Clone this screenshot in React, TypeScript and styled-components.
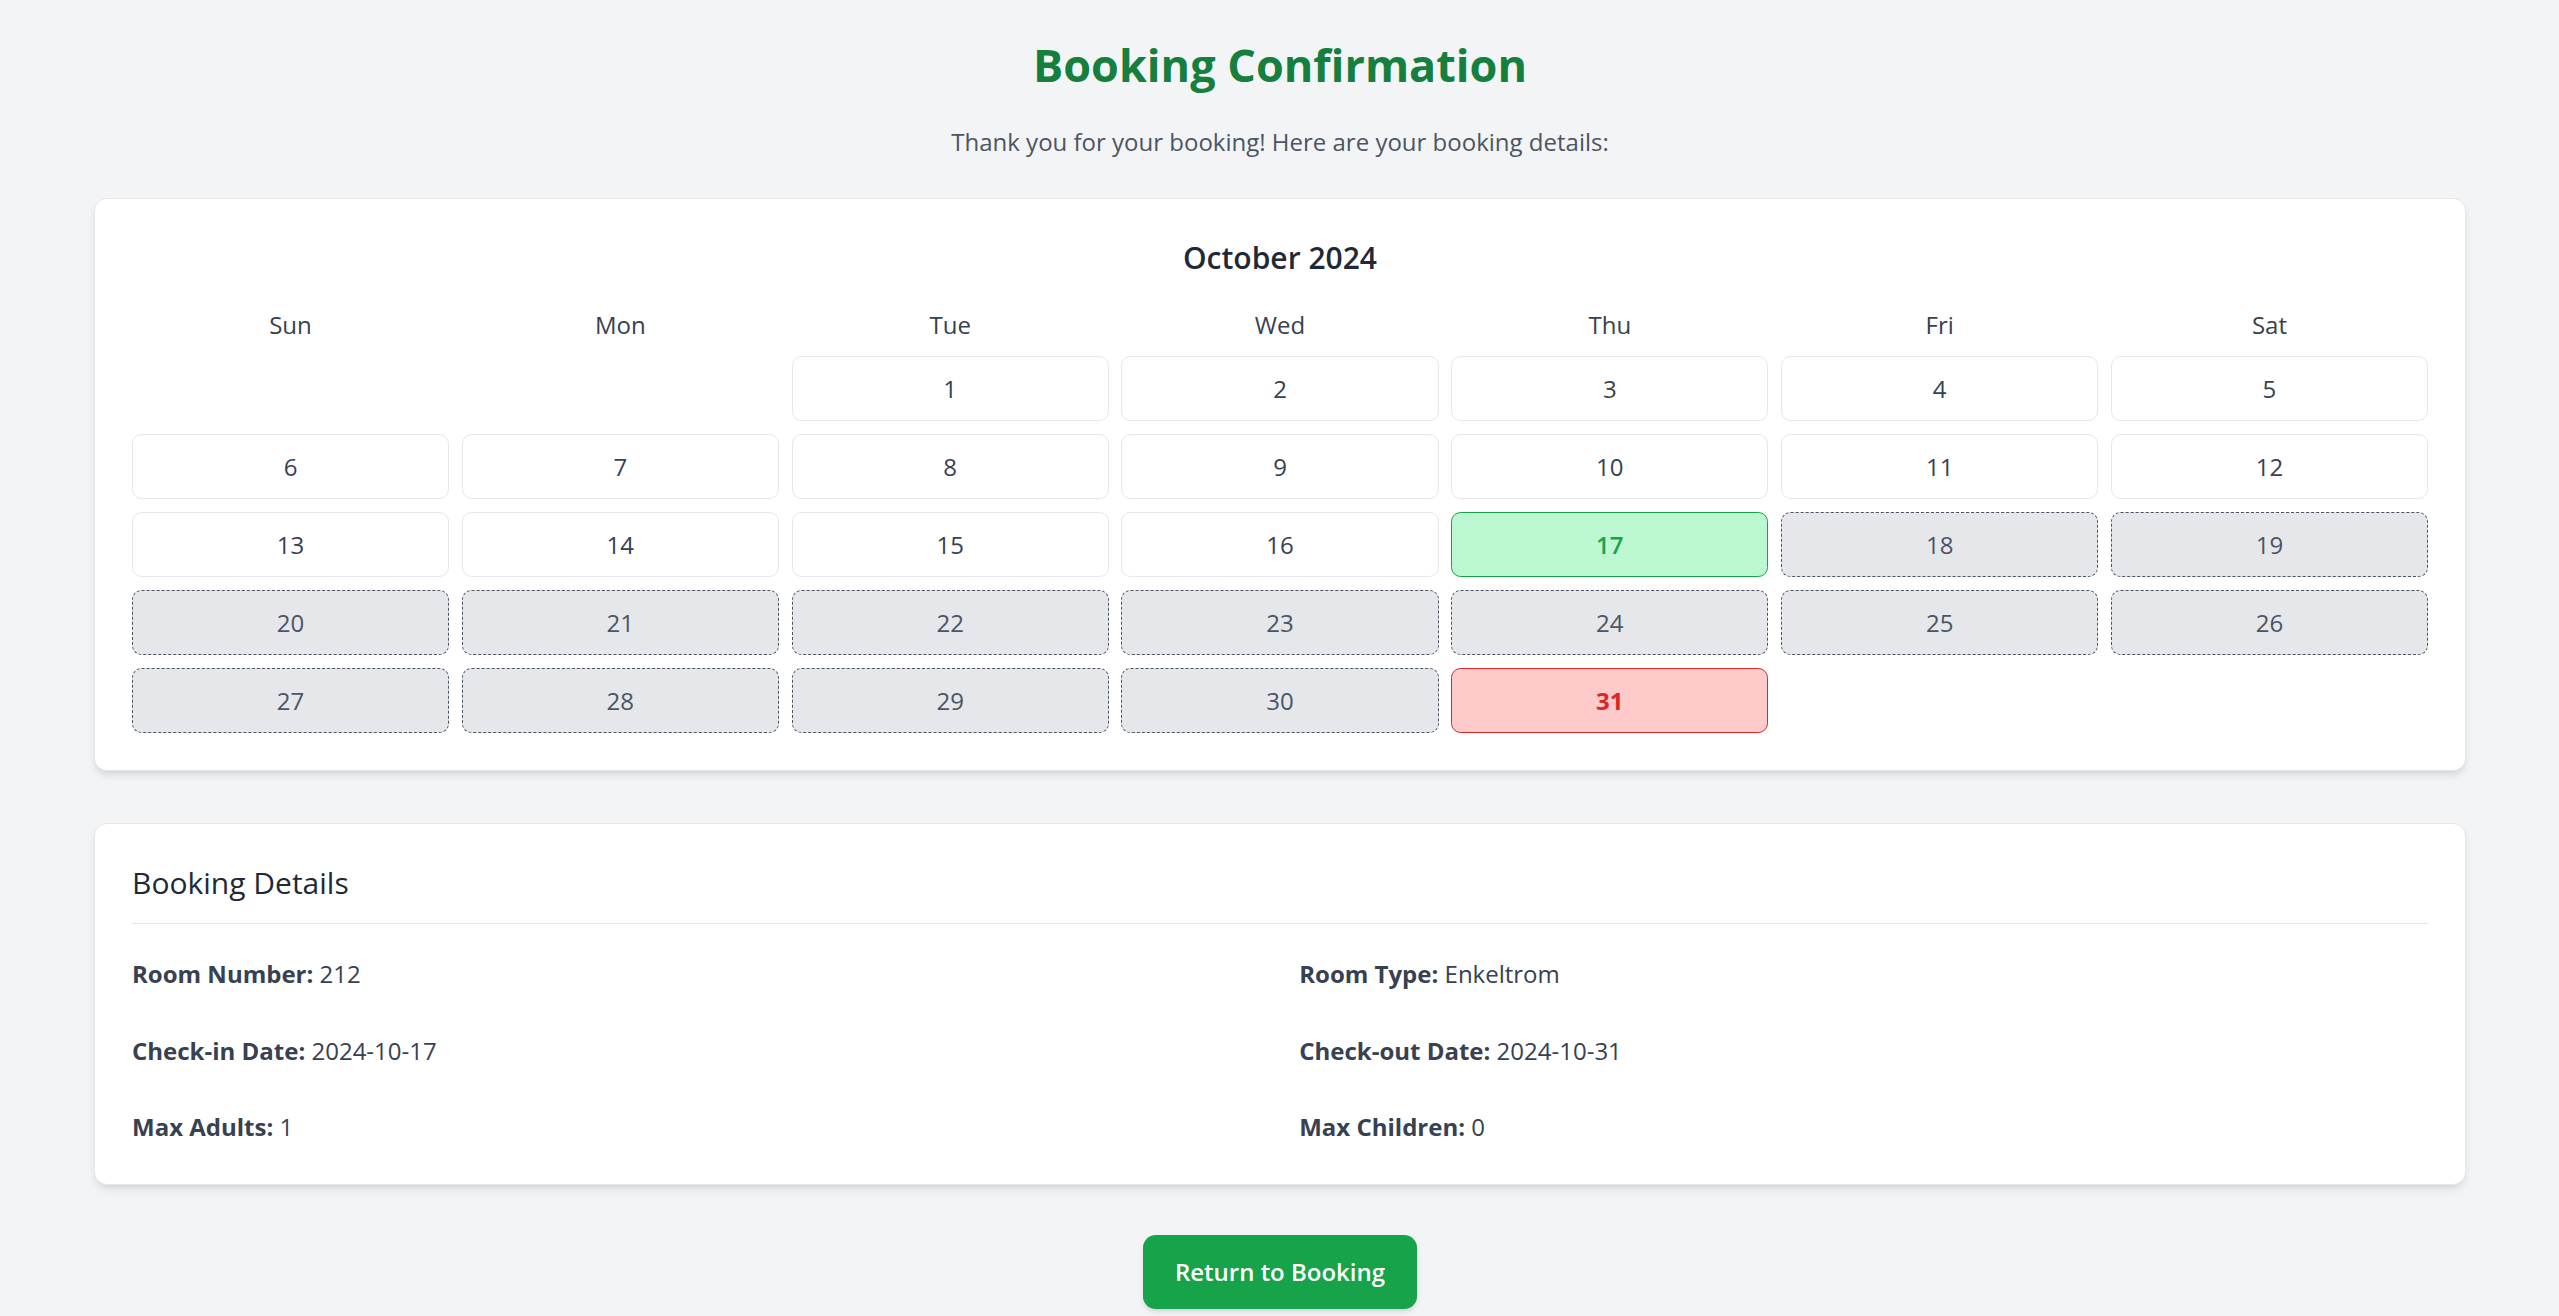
import React from "react";
import styled, { createGlobalStyle, css } from "styled-components";

const GlobalStyle = createGlobalStyle`
  html, body {
    margin: 0;
    padding: 0;
    background: #f3f4f6;
  }
  body {
    font-family: "Segoe UI", "Open Sans", "Noto Sans", sans-serif;
    color: #374151;
  }
  * { box-sizing: border-box; }
`;

const Page = styled.main`
  min-height: 100vh;
  background: #f3f4f6;
  padding: 36px 93px 38px 94px;
  display: flex;
  flex-direction: column;
  align-items: stretch;
`;

const Title = styled.h1`
  margin: 0 0 29.6px;
  font-size: 45px;
  line-height: 57.6px;
  font-weight: 700;
  color: #15803d;
  text-align: center;
`;

const Subtitle = styled.p`
  margin: 0 0 36.4px;
  font-size: 24px;
  line-height: 38.4px;
  color: #4b5563;
  text-align: center;
`;

const Card = styled.section`
  background: #ffffff;
  border: 1.5px solid #e5e7eb;
  border-radius: 12.8px;
  padding: 37px;
  box-shadow: 0 6px 10px -2px rgba(0, 0, 0, 0.1), 0 3px 6px -3px rgba(0, 0, 0, 0.08);
  & + & {
    margin-top: 51.2px;
  }
`;

const MonthTitle = styled.h2`
  margin: 0 0 25.6px;
  font-size: 30px;
  line-height: 44.8px;
  font-weight: 600;
  color: #1f2937;
  text-align: center;
`;

const CalendarGrid = styled.div`
  display: grid;
  grid-template-columns: repeat(7, 1fr);
  column-gap: 12.8px;
  row-gap: 13px;
`;

const DayHeader = styled.div`
  font-size: 24px;
  line-height: 37px;
  color: #374151;
  text-align: center;
`;

type CellKind = "empty" | "free" | "checkin" | "checkout" | "booked";

const Cell = styled.div<{ $kind: CellKind }>`
  height: 65px;
  border-radius: 9.6px;
  display: flex;
  align-items: center;
  justify-content: center;
  font-size: 24px;
  line-height: 38.4px;
  border: 1.6px solid transparent;
  ${({ $kind }) => {
    switch ($kind) {
      case "free":
        return css`
          background: #ffffff;
          border-color: #e5e7eb;
          color: #374151;
        `;
      case "checkin":
        return css`
          background: #bbf7d0;
          border-color: #16a34a;
          color: #16a34a;
          font-weight: 600;
        `;
      case "checkout":
        return css`
          background: #fecaca;
          border-color: #dc2626;
          color: #dc2626;
          font-weight: 700;
        `;
      case "booked":
        return css`
          background: #e5e7eb;
          border: 1.6px dashed #4b5563;
          color: #4b5563;
        `;
      default:
        return css`
          background: transparent;
        `;
    }
  }}
`;

const SectionHeading = styled.h2`
  margin: 0 0 31px;
  padding-bottom: 18px;
  border-bottom: 1.6px solid #e5e7eb;
  font-size: 30px;
  line-height: 44.8px;
  font-weight: 500;
  color: #1f2937;
`;

const DetailsGrid = styled.div`
  display: grid;
  grid-template-columns: 1fr 1fr;
  column-gap: 38.4px;
  row-gap: 38px;
`;

const DetailItem = styled.p`
  margin: 0;
  font-size: 24px;
  line-height: 38.4px;
  color: #374151;
`;

const Label = styled.strong`
  font-weight: 700;
  color: #374151;
`;

const ButtonRow = styled.div`
  display: flex;
  justify-content: center;
  margin-top: 50.5px;
`;

const ReturnButton = styled.button`
  height: 74px;
  padding: 0 32px;
  border: none;
  border-radius: 12.8px;
  background: #16a34a;
  color: #ffffff;
  font-family: inherit;
  font-size: 24px;
  line-height: 38.4px;
  font-weight: 600;
  cursor: pointer;
  box-shadow: 0 4px 6px -1px rgba(0, 0, 0, 0.1), 0 2px 4px -2px rgba(0, 0, 0, 0.1);
`;

const days = ["Sun", "Mon", "Tue", "Wed", "Thu", "Fri", "Sat"];

function kindFor(day: number): CellKind {
  if (day === 17) return "checkin";
  if (day === 31) return "checkout";
  if (day > 17 && day < 31) return "booked";
  return "free";
}

const details: [string, string][] = [
  ["Room Number:", "212"],
  ["Room Type:", "Enkeltrom"],
  ["Check-in Date:", "2024-10-17"],
  ["Check-out Date:", "2024-10-31"],
  ["Max Adults:", "1"],
  ["Max Children:", "0"],
];

export default function App() {
  const leading = 2; // Oct 1, 2024 is a Tuesday
  const cells: { key: string; day?: number }[] = [];
  for (let i = 0; i < leading; i++) cells.push({ key: `e${i}` });
  for (let d = 1; d <= 31; d++) cells.push({ key: `d${d}`, day: d });

  return (
    <>
      <GlobalStyle />
      <Page>
        <Title>Booking Confirmation</Title>
        <Subtitle>Thank you for your booking! Here are your booking details:</Subtitle>

        <Card>
          <MonthTitle>October 2024</MonthTitle>
          <CalendarGrid>
            {days.map((d) => (
              <DayHeader key={d}>{d}</DayHeader>
            ))}
            {cells.map((c) =>
              c.day ? (
                <Cell key={c.key} $kind={kindFor(c.day)}>
                  {c.day}
                </Cell>
              ) : (
                <Cell key={c.key} $kind="empty" />
              )
            )}
          </CalendarGrid>
        </Card>

        <Card>
          <SectionHeading>Booking Details</SectionHeading>
          <DetailsGrid>
            {details.map(([label, value]) => (
              <DetailItem key={label}>
                <Label>{label}</Label> {value}
              </DetailItem>
            ))}
          </DetailsGrid>
        </Card>

        <ButtonRow>
          <ReturnButton>Return to Booking</ReturnButton>
        </ButtonRow>
      </Page>
    </>
  );
}
